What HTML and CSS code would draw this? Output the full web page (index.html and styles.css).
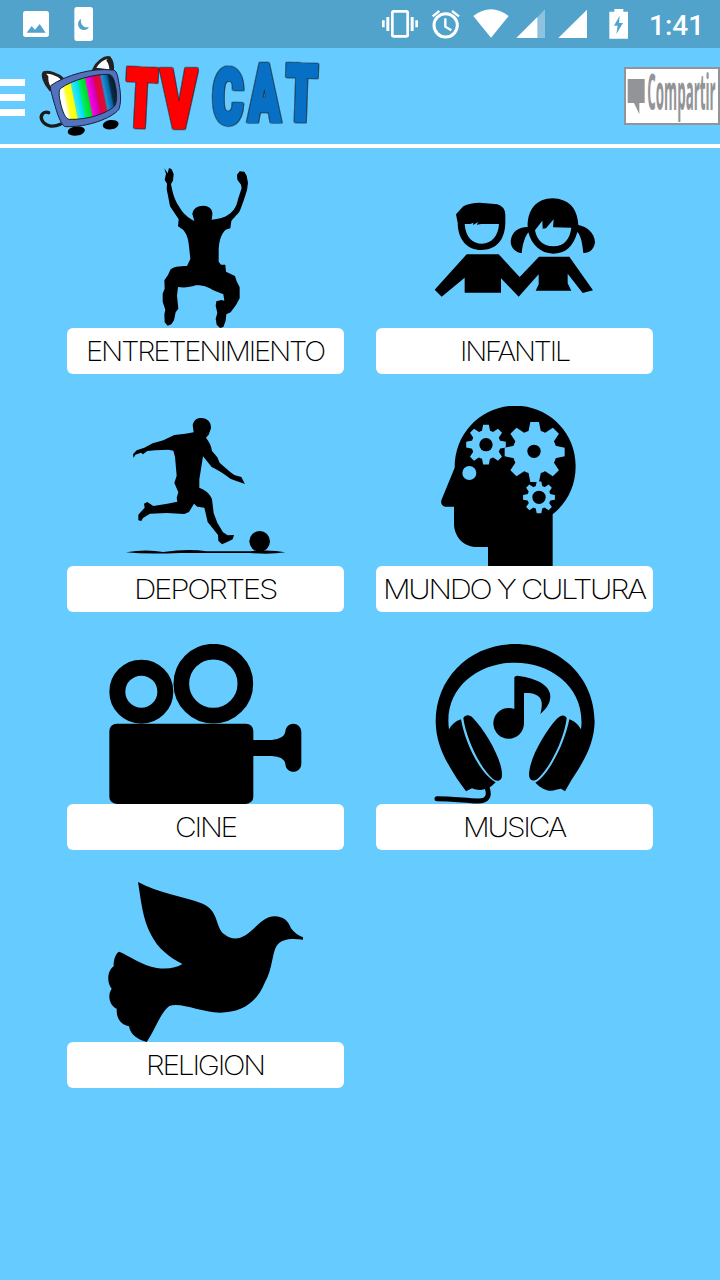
FILE: index.html
```html
<!DOCTYPE html>
<html lang="es">
<head>
  <meta charset="UTF-8">
  <title>TV CAT</title>
  <link rel="stylesheet" href="styles.css">
</head>
<body>

  <!-- Status bar -->
  <div class="status-bar">
    <svg class="status-left" viewBox="0 0 360 144">
      <rect x="69" y="33" width="78" height="78" rx="8" fill="#fff"/>
      <path d="M80 98L95 78L105 89L119 72L137 98Z" fill="#51a3cc"/>
      <rect x="223" y="21" width="56" height="102" rx="8" fill="#fff"/>
      <path d="M243 56C230 65 232 84 246 89C255 92 263 88 267 81C252 85 240 74 243 56Z" fill="#51a3cc"/>
    </svg>
    <svg class="status-right" viewBox="0 0 855 144" fill="#fff">
      <rect x="97" y="34" width="46" height="75" rx="4" fill="none" stroke="#fff" stroke-width="8"/>
      <path d="M66 61h8v21h-8zM79 51h9v42h-9zM152 51h9v42h-9zM166 61h8v21h-8z"/>
      <circle cx="257" cy="76" r="35" fill="none" stroke="#fff" stroke-width="9"/>
      <path d="M256 55V80L274 91M218 49L238 33M276 33L297 49" fill="none" stroke="#fff" stroke-width="7"/>
      <path d="M340 48Q393 8 446 48L393 113Z"/>
      <path d="M555 28V114H530V54Z" opacity=".35"/>
      <path d="M532 51V114H469Z"/>
      <path d="M681 29V114H595Z"/>
      <path d="M748 35h15v-8h27v8h14v81h-56z"/>
      <path d="M779 47L762 77H773L769 102L789 69H777Z" fill="#51a3cc"/>
    </svg>
    <span class="clock">1:41</span>
  </div>

  <!-- Header -->
  <header class="header">
    <div class="menu"><span></span><span></span><span></span></div>
    <svg class="logo" viewBox="105 144 870 288">
      <defs>
        <linearGradient id="bars" gradientUnits="userSpaceOnUse" x1="180" y1="306" x2="352" y2="272">
          <stop offset="0" stop-color="#fff"/>
          <stop offset=".08" stop-color="#fff"/>
          <stop offset=".13" stop-color="#ff3"/>
          <stop offset=".23" stop-color="#ff0"/>
          <stop offset=".25" stop-color="#3fe8e8"/>
          <stop offset=".35" stop-color="#0df"/>
          <stop offset=".38" stop-color="#0e6"/>
          <stop offset=".49" stop-color="#00d820"/>
          <stop offset=".51" stop-color="#f0e"/>
          <stop offset=".62" stop-color="#d100b4"/>
          <stop offset=".65" stop-color="#e5004c"/>
          <stop offset=".75" stop-color="#d8102c"/>
          <stop offset=".78" stop-color="#1793da"/>
          <stop offset=".87" stop-color="#0764a6"/>
          <stop offset=".9" stop-color="#0c2b40"/>
          <stop offset="1" stop-color="#06182a"/>
        </linearGradient>
      </defs>
      <path d="M146 338C129 332 119 348 126 361C136 380 160 382 181 373" fill="none" stroke="#1a1a1a" stroke-width="10" stroke-linecap="round"/>
      <ellipse cx="229" cy="393" rx="26" ry="14" transform="rotate(-8 229 393)"/>
      <ellipse cx="332" cy="374" rx="24" ry="14" transform="rotate(-8 332 374)"/>
      <path d="M150 268C133 248 126 226 132 218C145 215 172 220 189 238Z" fill="#fff" stroke="#222" stroke-width="9"/>
      <path d="M134 216L145 229C144 242 147 252 152 261L148 268C133 252 124 225 134 216Z" fill="#222"/>
      <path d="M282 207C291 187 311 171 328 173C337 184 339 200 337 214Z" fill="#fff" stroke="#222" stroke-width="9"/>
      <path d="M327 171L319 182C326 190 328 200 328 209H340C341 194 338 177 327 171Z" fill="#222"/>
      <path d="M152 257C197 225 277 203 337 210C350 209 353 226 357 252C363 281 364 310 356 329C333 355 264 382 197 380C188 382 174 351 166 320C158 294 149 263 152 257Z" fill="#5272bd" stroke="#18213c" stroke-width="3"/>
      <path d="M181 266C216 239 285 222 324 223C337 223 344 239 348 267C352 293 350 309 343 319C319 341 262 360 208 358C198 359 187 336 181 306C177 289 176 272 181 266Z" fill="url(#bars)" stroke="#17202c" stroke-width="3"/>
      <g class="logo-red">
        <text transform="translate(419 378) rotate(3) scale(.59 .98)">T</text>
        <text transform="translate(537 381) scale(.65 .98)">V</text>
      </g>
      <g class="logo-blue">
        <text transform="translate(682 369) rotate(1) scale(.57 .93)">C</text>
        <text transform="translate(793 361) scale(.56 .96)">A</text>
        <text transform="translate(901 361) rotate(2) scale(.6 .95)">T</text>
      </g>
    </svg>
    <button class="share">
      <svg viewBox="0 0 288 174">
        <path d="M11 36H62V108H46V142L30 108H11Z" fill="#929497"/>
        <text class="share-text" x="70" y="129" textLength="205" lengthAdjust="spacingAndGlyphs">Compartir</text>
      </svg>
    </button>
  </header>

  <!-- Categories -->
  <main class="grid">
    <div class="card">
      <svg class="icon" viewBox="21 24 831 480">
        <path d="M313 25L323 40L327 24L335 28L341 42L339 62L333 72C338 99 343 119 358 141C371 163 383 172 403 183L397 162C400 144 412 138 430 137C450 138 459 149 457 166L455 179C476 177 494 173 507 163C524 151 530 137 534 118L545 84L543 74L532 59L531 44L539 34L553 35L560 47L564 68L561 91C554 113 548 132 542 146C539 160 518 174 514 184L511 205L497 209C481 225 477 247 476 271V305L483 314L496 314L498 335L525 348L530 364L539 382V415L528 435L512 457L499 463L497 482L490 501L480 504L470 494L467 476L472 459L467 437L469 424L484 420L493 422L490 403L460 391C445 382 431 375 407 376C389 382 372 384 354 381L351 407L355 446L347 457L342 481L334 493L323 497L314 487L313 463L316 449L308 425V401L314 386L313 361L324 345L331 329C339 321 356 318 381 318L391 297L387 259C385 237 381 224 370 210L354 199L356 178L330 139L324 107L320 88L321 71L314 60L318 42Z"/>
      </svg>
      <div class="label"><svg viewBox="0 0 277 46"><text x="19" y="33" textLength="238" lengthAdjust="spacingAndGlyphs">ENTRETENIMIENTO</text></svg></div>
    </div>

    <div class="card">
      <svg class="icon" viewBox="18 24 831 480">
        <path fill-rule="evenodd" d="M258 163L280 139Q299 128 330 128L382 133Q404 139 406 163V190C404 245 376 269 334 270C292 269 264 241 263 188ZM284 192C287 233 308 251 336 251C363 250 385 230 387 192H334L320 194L325 186L309 195L310 188L301 192Z"/>
        <path fill-rule="evenodd" d="M473 201C472 149 500 115 548 115C594 116 623 144 625 195C647 198 674 218 675 246C673 268 657 280 640 279C637 252 634 230 622 216C610 260 587 281 549 281C512 280 485 255 475 217C464 232 458 252 455 280C437 277 422 264 422 244C425 216 443 202 473 201ZM495 211C501 244 523 260 551 259C583 257 599 239 604 203L549 202L551 178L528 205L518 206L517 182Z"/>
        <path d="M290 283H386L449 351L507 290H598L669 391L638 399L593 341V370L604 392H497L506 373V343L446 410L393 355V398H284V353L215 410L194 389Z"/>
      </svg>
      <div class="label"><svg viewBox="0 0 277 46"><text x="84" y="33" textLength="109" lengthAdjust="spacingAndGlyphs">INFANTIL</text></svg></div>
    </div>

    <div class="card">
      <svg class="icon" viewBox="21 18 831 480">
        <path d="M401 97L398 75C402 59 411 53 424 54C443 54 454 68 453 85L446 104L438 113C447 124 454 137 456 153L472 172L479 188C492 200 506 212 523 225L544 231L555 252L529 243L511 236C492 222 475 210 455 201L429 169L423 207L418 238V263C436 271 450 280 456 298L461 339L472 368L489 397L503 406L522 405L518 418L500 427L486 433L475 422L474 405L443 366L433 323L412 320L402 311L387 336L373 342L320 339L270 341L249 354L244 363L235 361L235 344L254 323L252 311L262 306L280 318L322 311L352 305L350 293L355 277L343 249L350 227L345 170L340 152L325 149L286 151L262 153L249 163L243 158L226 164L221 174L219 163L230 151L253 143L278 130L310 121L343 105L376 101Z"/>
        <circle cx="599" cy="424" r="31"/>
        <path d="M198 457Q257 446 310 456Q385 445 440 454H570Q632 448 676 457Q630 464 570 459H360Q259 463 198 457Z"/>
      </svg>
      <div class="label"><svg viewBox="0 0 277 46"><text x="67" y="33" textLength="142" lengthAdjust="spacingAndGlyphs">DEPORTES</text></svg></div>
    </div>

    <div class="card">
      <svg class="icon" viewBox="18 18 831 480">
        <defs>
          <g id="gear">
            <circle r="66"/>
            <path id="teeth" d="M-20-55L-13-90H13L20-55ZM-20 55L-13 90H13L20 55ZM-55-20L-90-13V13L-55 20ZM55-20L90-13V13L55 20Z"/>
            <use href="#teeth" transform="rotate(45)"/>
          </g>
        </defs>
        <path d="M438 17C538 19 617 98 617 198C617 258 592 308 548 343V498H354V441H316C278 439 252 409 252 370V320H225Q211 317 214 301L254 203C254 95 337 17 438 17Z"/>
        <g fill="#66ccff">
          <use href="#gear" transform="translate(348 134) scale(.66)"/>
          <use href="#gear" transform="translate(494 156)"/>
          <circle cx="298" cy="219" r="21"/>
        </g>
        <circle cx="507" cy="292" r="43"/>
        <use href="#gear" transform="translate(507 292) scale(.53)" fill="#66ccff"/>
        <circle cx="348" cy="134" r="20"/>
        <circle cx="492" cy="154" r="20"/>
        <circle cx="507" cy="292" r="20"/>
      </svg>
      <div class="label"><svg viewBox="0 0 277 46"><text x="7" y="33" textLength="262" lengthAdjust="spacingAndGlyphs">MUNDO Y CULTURA</text></svg></div>
    </div>

    <div class="card">
      <svg class="icon" viewBox="21 24 831 480">
        <circle cx="244" cy="167" r="72" fill="none" stroke="#000" stroke-width="48"/>
        <circle cx="460" cy="143" r="96" fill="none" stroke="#000" stroke-width="47"/>
        <rect x="148" y="263" width="432" height="241" rx="22"/>
        <path d="M578 312H635Q673 308 676 287C678 255 722 255 724 287V384C722 415 678 415 676 384Q673 362 635 360H578Z"/>
      </svg>
      <div class="label"><svg viewBox="0 0 277 46"><text x="108" y="33" textLength="61" lengthAdjust="spacingAndGlyphs">CINE</text></svg></div>
    </div>

    <div class="card">
      <svg class="icon" viewBox="18 24 831 480">
        <path d="M435 24C568 24 674 123 674 257C672 323 644 372 604 433L585 466L573 458L558 461C539 469 516 461 496 440C536 417 584 323 598 250C614 255 625 267 633 280C648 157 546 80 435 80C323 80 220 158 237 280Q250 257 273 250C286 326 333 415 377 439C361 458 333 469 306 457L288 466L261 428C226 374 198 323 197 257C197 124 301 24 435 24Z"/>
        <path d="M280 246C286 235 300 236 309 246C351 289 404 385 395 425C390 437 377 436 369 429C330 397 287 303 280 246Z"/>
        <path d="M590 246C585 235 573 236 562 247C520 292 471 383 478 423C482 437 495 435 503 428C541 396 584 304 590 246Z"/>
        <path d="M351 454C361 481 351 496 323 495C282 493 242 488 201 488" fill="none" stroke="#000" stroke-width="15" stroke-linecap="round"/>
        <circle cx="416" cy="262" r="46"/>
        <path d="M433 124Q436 118 447 120C496 126 543 148 541 183C540 207 524 222 511 234C523 193 513 169 462 171V262H433Z"/>
      </svg>
      <div class="label"><svg viewBox="0 0 277 46"><text x="87" y="33" textLength="102" lengthAdjust="spacingAndGlyphs">MUSICA</text></svg></div>
    </div>

    <div class="card">
      <svg class="icon" viewBox="21 24 831 480">
        <path d="M234 24C294 58 370 66 428 89C479 112 464 159 493 181C522 204 550 192 573 171C599 149 614 127 645 127C669 128 684 139 693 163Q706 181 729 190V197C699 193 665 193 650 215C635 240 639 281 615 325C591 385 546 416 480 416C420 414 362 383 328 396C301 416 282 474 260 504C238 498 211 484 207 457C186 452 169 439 170 404C151 396 140 367 155 344C140 327 141 291 161 277C160 256 168 236 178 233C208 246 245 273 290 282C324 287 349 281 367 270C327 250 293 222 274 184C248 137 243 80 234 24Z"/>
      </svg>
      <div class="label"><svg viewBox="0 0 277 46"><text x="79" y="33" textLength="118" lengthAdjust="spacingAndGlyphs">RELIGION</text></svg></div>
    </div>
  </main>

</body>
</html>
```

FILE: styles.css
```css
body {
  margin: 0;
  min-height: 100vh;
  background-color: #66ccff;
  font-family: Inter, "Liberation Sans", sans-serif;
}

svg {
  display: block;
}

.status-bar {
  display: flex;
  align-items: center;
  height: 48px;
  background-color: #51a3cc;
}

.status-left {
  width: 120px;
  height: 48px;
  margin-right: 240px;
}

.status-right {
  width: 285px;
  height: 48px;
}

.clock {
  margin-left: 4px;
  padding-top: 2px;
  color: #fff;
  font-family: Roboto, sans-serif;
  font-size: 28px;
  font-weight: 500;
}

.header {
  display: flex;
  align-items: center;
  height: 96px;
  border-bottom: 4px solid #fff;
}

.menu {
  display: flex;
  flex-direction: column;
  gap: 8px;
  width: 25px;
  margin-right: 10px;
  padding-top: 3px;
}

.menu span {
  height: 7px;
  background-color: #fff;
}

.logo {
  width: 290px;
  height: 96px;
  overflow: visible;
}

.logo text {
  font-family: Roboto, sans-serif;
  font-size: 244px;
  font-weight: 900;
  text-anchor: middle;
  stroke-width: 4px;
  vector-effect: non-scaling-stroke;
}

.logo-red,
.logo-blue {
  filter: drop-shadow(2px 1px 0 #14202c) drop-shadow(-2px -1px 0 #14202c);
}

.logo-red {
  fill: #ff0000;
  stroke: #ff0000;
}

.logo-blue {
  fill: #0870c4;
  stroke: #0870c4;
}

.share {
  box-sizing: border-box;
  width: 96px;
  height: 58px;
  margin-left: auto;
  padding: 0;
  border: 2px solid #929497;
  background-color: #fff;
}

.share svg {
  width: 96px;
  height: 58px;
  margin: -2px;
  overflow: visible;
}

.share-text {
  fill: #929497;
  font-family: "Open Sans", sans-serif;
  font-size: 150px;
  font-weight: 700;
}

.grid {
  display: grid;
  grid-template-columns: 277px 277px;
  gap: 32px;
  justify-content: center;
  padding-top: 20px;
}

.icon {
  width: 277px;
  height: 160px;
}

.label {
  height: 46px;
  border-radius: 6px;
  background-color: #fff;
}

.label text {
  fill: #000;
  font-size: 27px;
  font-weight: 200;
  letter-spacing: -2px;
}
```
